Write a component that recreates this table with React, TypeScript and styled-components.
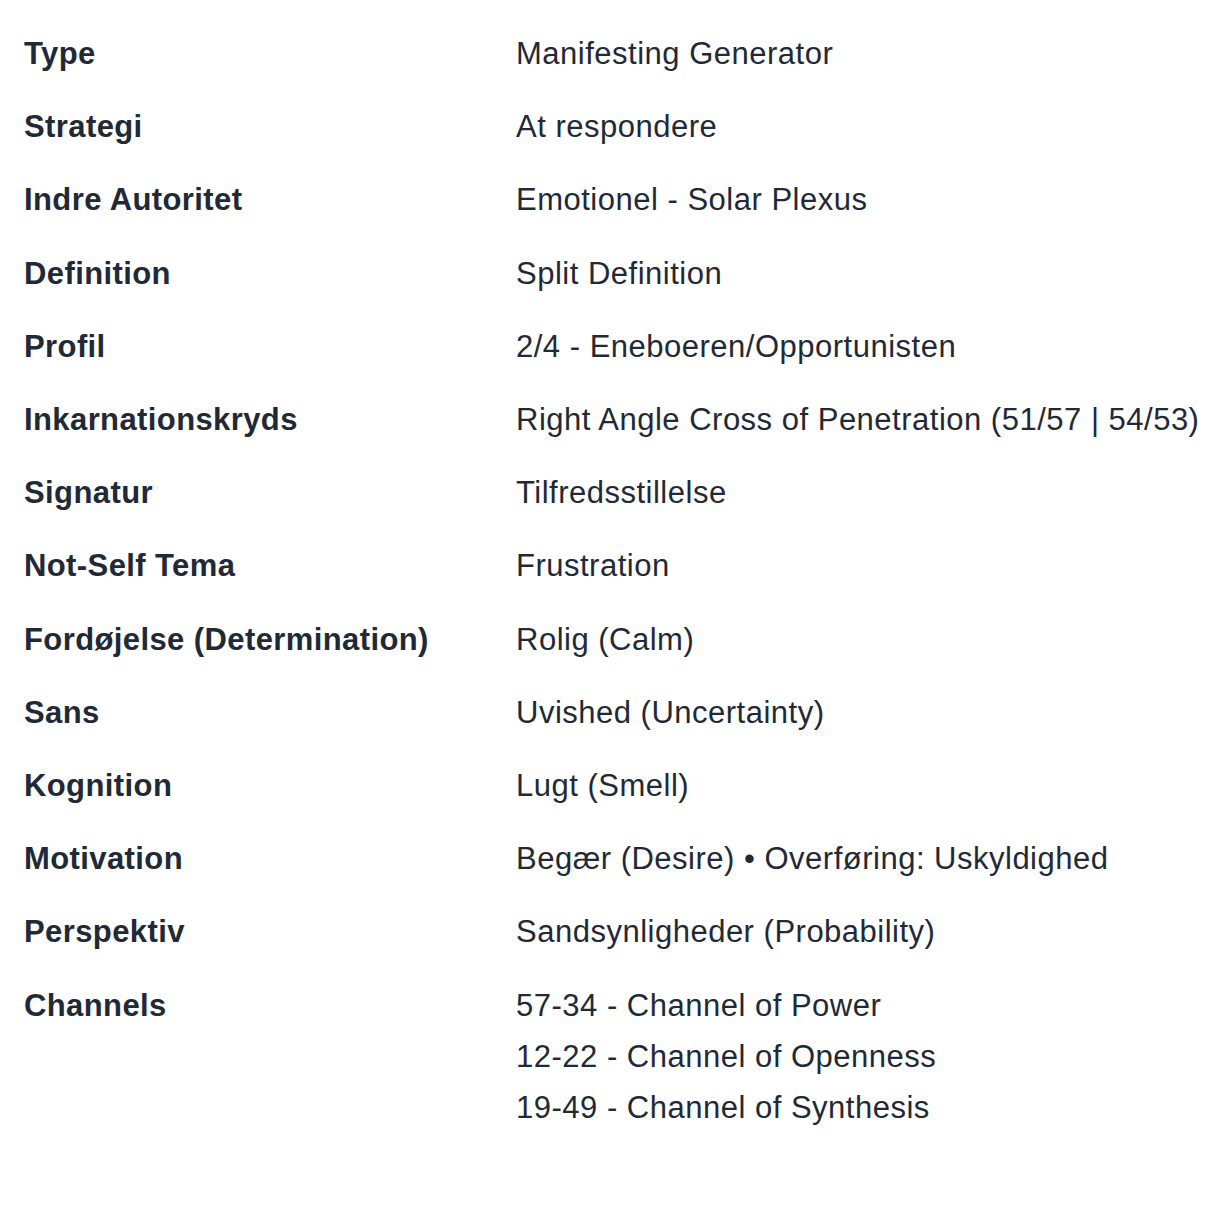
import styled, { createGlobalStyle } from 'styled-components';

const GlobalStyle = createGlobalStyle`
  html, body {
    margin: 0;
    padding: 0;
    background: #ffffff;
  }
  body {
    font-family: "Liberation Sans", Arial, Helvetica, sans-serif;
    color: #1f2937;
  }
`;

type Row = { label: string; values: string[] };

const rows: Row[] = [
  { label: 'Type', values: ['Manifesting Generator'] },
  { label: 'Strategi', values: ['At respondere'] },
  { label: 'Indre Autoritet', values: ['Emotionel - Solar Plexus'] },
  { label: 'Definition', values: ['Split Definition'] },
  { label: 'Profil', values: ['2/4 - Eneboeren/Opportunisten'] },
  {
    label: 'Inkarnationskryds',
    values: ['Right Angle Cross of Penetration (51/57 | 54/53)'],
  },
  { label: 'Signatur', values: ['Tilfredsstillelse'] },
  { label: 'Not-Self Tema', values: ['Frustration'] },
  { label: 'Fordøjelse (Determination)', values: ['Rolig (Calm)'] },
  { label: 'Sans', values: ['Uvished (Uncertainty)'] },
  { label: 'Kognition', values: ['Lugt (Smell)'] },
  {
    label: 'Motivation',
    values: ['Begær (Desire) • Overføring: Uskyldighed'],
  },
  { label: 'Perspektiv', values: ['Sandsynligheder (Probability)'] },
  {
    label: 'Channels',
    values: [
      '57-34 - Channel of Power',
      '12-22 - Channel of Openness',
      '19-49 - Channel of Synthesis',
    ],
  },
];

export default function App() {
  return (
    <>
      <GlobalStyle />
      <Page>
        <Table>
          {rows.map((row) => (
            <TableRow key={row.label}>
              <Label>{row.label}</Label>
              <Values>
                {row.values.map((v) => (
                  <Value key={v}>{v}</Value>
                ))}
              </Values>
            </TableRow>
          ))}
        </Table>
      </Page>
    </>
  );
}

const Page = styled.div`
  padding: 17px 24px 40px 24px;
`;

const Table = styled.div`
  display: flex;
  flex-direction: column;
`;

const TableRow = styled.div`
  display: grid;
  grid-template-columns: 492px 1fr;
  padding: 11.1px 0;
  font-size: 31px;
  line-height: 51px;
`;

const Label = styled.div`
  font-weight: 700;
  letter-spacing: 0.4px;
  white-space: nowrap;
`;

const Values = styled.div`
  display: flex;
  flex-direction: column;
`;

const Value = styled.div`
  font-weight: 400;
  letter-spacing: 0.5px;
  white-space: nowrap;
`;
